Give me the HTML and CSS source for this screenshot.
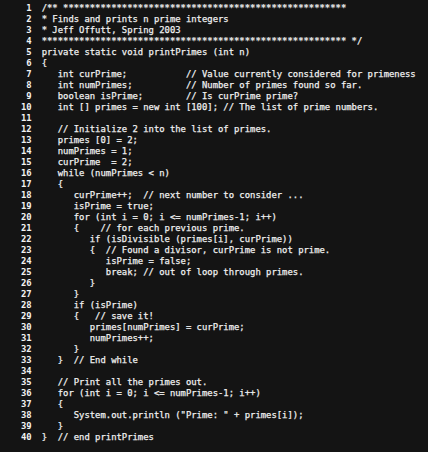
FILE: index.html
```html
<!DOCTYPE html>
<html>
<head>
<meta charset="utf-8">
<link rel="stylesheet" href="styles.css">
</head>
<body>
<div class="editor">
<pre class="gutter">1
2
3
4
5
6
7
8
9
10
11
12
13
14
15
16
17
18
19
20
21
22
23
24
25
26
27
28
29
30
31
32
33
34
35
36
37
38
39
40</pre>
<pre class="code">/** *****************************************************
* Finds and prints n prime integers
* Jeff Offutt, Spring 2003
********************************************************* */
private static void printPrimes (int n)
{
   int curPrime;           // Value currently considered for primeness
   int numPrimes;          // Number of primes found so far.
   boolean isPrime;        // Is curPrime prime?
   int [] primes = new int [100]; // The list of prime numbers.

   // Initialize 2 into the list of primes.
   primes [0] = 2;
   numPrimes = 1;
   curPrime  = 2;
   while (numPrimes &lt; n)
   {
      curPrime++;  // next number to consider ...
      isPrime = true;
      for (int i = 0; i &lt;= numPrimes-1; i++)
      {    // for each previous prime.
         if (isDivisible (primes[i], curPrime))
         {  // Found a divisor, curPrime is not prime.
            isPrime = false;
            break; // out of loop through primes.
         }
      }
      if (isPrime)
      {   // save it!
         primes[numPrimes] = curPrime;
         numPrimes++;
      }
   }  // End while

   // Print all the primes out.
   for (int i = 0; i &lt;= numPrimes-1; i++)
   {
      System.out.println ("Prime: " + primes[i]);
   }
}  // end printPrimes</pre>
</div>
</body>
</html>
```
FILE: styles.css
```css
html, body {
  margin: 0;
  padding: 0;
  background: #141414;
}
.editor {
  display: flex;
  padding: 3px 0 0 0;
  font-family: "DejaVu Sans Mono", monospace;
  font-size: 8.9px;
  line-height: 11px;
  color: #f0f0f0;
}
pre {
  margin: 0;
  font: inherit;
}
.gutter {
  width: 2ch;
  margin-left: 21px;
  margin-right: 10px;
  text-align: right;
  font-weight: bold;
  color: #f2f2f2;
}
.code {
  flex: 1;
  -webkit-text-stroke: 0.25px #f0f0f0;
}
```
